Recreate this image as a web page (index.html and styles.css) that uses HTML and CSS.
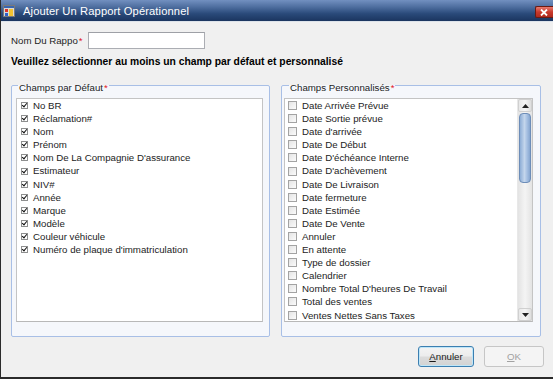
FILE: index.html
```html
<!DOCTYPE html>
<html lang="fr">
<head>
<meta charset="utf-8">
<title>Ajouter Un Rapport Opérationnel</title>
<link rel="stylesheet" href="styles.css">
</head>
<body>
<div class="window">
  <div class="titlebar">
    <div class="title-left">
      <svg class="app-icon" width="12" height="12" viewBox="0 0 12 12">
        <rect x="0.5" y="0.5" width="11" height="11" fill="#d9d9d9" stroke="#7a7a7a"/>
        <rect x="1" y="1" width="10" height="2" fill="#3a66b0"/>
        <rect x="2" y="4" width="3" height="3" fill="#d8342a"/>
        <rect x="2" y="8" width="3" height="3" fill="#2f62c8"/>
        <rect x="6" y="4" width="4" height="7" fill="#f2c230"/>
      </svg>
      <span class="title-text">Ajouter Un Rapport Opérationnel</span>
    </div>
    <div class="close-btn">
      <svg width="8" height="7" viewBox="0 0 8 7"><path d="M1 0.5 L7 6.5 M7 0.5 L1 6.5" stroke="#fff" stroke-width="1.8"/></svg>
    </div>
  </div>
  <div class="content">
    <div class="name-row">
      <span class="label">Nom Du Rappo<span class="req">*</span></span>
      <div class="textbox"></div>
    </div>
    <div class="hint">Veuillez sélectionner au moins un champ par défaut et personnalisé</div>
    <div class="groups">
      <fieldset class="group group-left">
        <legend>Champs par Défaut<span class="req">*</span></legend>
        <div class="listbox">
          <ul class="items">
            <li><span class="cb on"></span>No BR</li>
            <li><span class="cb on"></span>Réclamation#</li>
            <li><span class="cb on"></span>Nom</li>
            <li><span class="cb on"></span>Prénom</li>
            <li><span class="cb on"></span>Nom De La Compagnie D'assurance</li>
            <li><span class="cb on"></span>Estimateur</li>
            <li><span class="cb on"></span>NIV#</li>
            <li><span class="cb on"></span>Année</li>
            <li><span class="cb on"></span>Marque</li>
            <li><span class="cb on"></span>Modèle</li>
            <li><span class="cb on"></span>Couleur véhicule</li>
            <li><span class="cb on"></span>Numéro de plaque d'immatriculation</li>
          </ul>
        </div>
      </fieldset>
      <fieldset class="group group-right">
        <legend>Champs Personnalisés<span class="req">*</span></legend>
        <div class="listbox">
          <ul class="items">
            <li><span class="cb"></span>Date Arrivée Prévue</li>
            <li><span class="cb"></span>Date Sortie prévue</li>
            <li><span class="cb"></span>Date d'arrivée</li>
            <li><span class="cb"></span>Date De Début</li>
            <li><span class="cb"></span>Date D'échéance Interne</li>
            <li><span class="cb"></span>Date D'achèvement</li>
            <li><span class="cb"></span>Date De Livraison</li>
            <li><span class="cb"></span>Date fermeture</li>
            <li><span class="cb"></span>Date Estimée</li>
            <li><span class="cb"></span>Date De Vente</li>
            <li><span class="cb"></span>Annuler</li>
            <li><span class="cb"></span>En attente</li>
            <li><span class="cb"></span>Type de dossier</li>
            <li><span class="cb"></span>Calendrier</li>
            <li><span class="cb"></span>Nombre Total D'heures De Travail</li>
            <li><span class="cb"></span>Total des ventes</li>
            <li><span class="cb"></span>Ventes Nettes Sans Taxes</li>
          </ul>
          <div class="scrollbar">
            <div class="sb-btn"><svg width="7" height="4" viewBox="0 0 7 4"><path d="M0 4 L3.5 0 L7 4 Z" fill="#222"/></svg></div>
            <div class="sb-track">
              <div class="sb-thumb"></div>
            </div>
            <div class="sb-btn"><svg width="7" height="4" viewBox="0 0 7 4"><path d="M0 0 L3.5 4 L7 0 Z" fill="#222"/></svg></div>
          </div>
        </div>
      </fieldset>
    </div>
    <div class="buttons">
      <div class="btn btn-default"><span class="u">A</span>nnuler</div>
      <div class="btn btn-disabled"><span class="u">O</span>K</div>
    </div>
  </div>
</div>
</body>
</html>
```
FILE: styles.css
```css
* { box-sizing: border-box; }
html, body { margin: 0; padding: 0; }
body {
  width: 553px;
  height: 379px;
  overflow: hidden;
  background: #f0f0f0;
  font-family: "Liberation Sans", Arial, sans-serif;
  font-size: 9.7px;
  color: #1c1c1c;
}
.window {
  width: 553px;
  height: 379px;
  display: flex;
  flex-direction: column;
  border-left: 1px solid #2b2b2b;
  border-bottom: 2px solid #2b2b2b;
  background: #f0f0f0;
}
.titlebar {
  height: 22px;
  flex: none;
  display: flex;
  align-items: center;
  justify-content: space-between;
  background: linear-gradient(#7290c0 0%, #4c6c9d 35%, #2a4a7a 65%, #1b355f 100%);
  border-bottom: 1px solid #dde3ea;
}
.title-left {
  display: flex;
  align-items: center;
  padding-left: 2px;
}
.app-icon { display: block; margin-top: 1px; }
.title-text {
  margin-left: 8px;
  color: #ffffff;
  font-size: 11.2px;
  letter-spacing: 0.1px;
}
.close-btn {
  width: 18px;
  height: 12px;
  margin-top: 3px;
  display: flex;
  align-items: center;
  justify-content: flex-start;
  padding-left: 4px;
  background: linear-gradient(#e77a6e, #c8392c 50%, #b02a1e);
  border: 1px solid #6b1a12;
  border-right: none;
  border-radius: 2px 0 0 2px;
}
.close-btn svg { display: block; }
.content {
  flex: 1;
  display: flex;
  flex-direction: column;
  padding: 10px 9px 0 10px;
}
.name-row {
  display: flex;
  align-items: center;
  height: 17px;
}
.label { width: 77px; }
.req { color: #e0161b; margin-left: 1px; }
.textbox {
  width: 117px;
  height: 17px;
  background: #fff;
  border: 1px solid #abadb3;
  border-top-color: #9ea0a6;
}
.hint {
  margin-top: 7px;
  height: 12px;
  line-height: 12px;
  font-weight: bold;
  font-size: 10.3px;
  color: #000;
}
.groups {
  display: flex;
  gap: 11px;
  margin-top: 8px;
}
.group {
  margin: 0;
  min-width: 0;
  border: 1px solid #a8bfe6;
  border-radius: 2px;
  background: #f5f7fb;
  height: 261px;
}
.group legend {
  padding: 6px 1px 0 1px;
  line-height: 12px;
  height: 18px;
  color: #1c1c1c;
}
.group-left legend { margin-left: 2px; }
.group-right legend { margin-left: 5px; }
.group-left { width: 259px; padding: 4px 6px 14px 4px; }
.group-right { width: 260px; padding: 4px 7px 14px 2px; }
.listbox {
  height: 224px;
  background: #fff;
  border: 1px solid #c4c4c4;
  border-bottom-color: #b8b8b8;
  display: flex;
}
.items {
  list-style: none;
  margin: 0;
  padding: 0;
  flex: 1;
}
.items li {
  height: 13.1px;
  line-height: 13.1px;
  display: flex;
  align-items: center;
  white-space: nowrap;
}
.group-left .items li { padding-left: 4px; }
.group-right .items li { padding-left: 3px; }
.cb {
  flex: none;
  position: relative;
  display: block;
}
.cb.on {
  width: 7px;
  height: 7px;
  margin-right: 5px;
  border: 1px solid #8e8f8f;
  background: #fff;
}
.cb.on::after {
  content: "";
  position: absolute;
  left: 1px;
  top: -1px;
  width: 2px;
  height: 4px;
  border-right: 1.6px solid #111;
  border-bottom: 1.6px solid #111;
  transform: rotate(40deg);
}
.group-right .cb {
  width: 9px;
  height: 9px;
  margin-right: 5px;
  border: 1px solid #a3a3a3;
  background: linear-gradient(135deg, #e4e4e4, #fbfbfb);
}
.scrollbar {
  width: 15px;
  flex: none;
  display: flex;
  flex-direction: column;
  background: linear-gradient(90deg, #e3e3e3, #f4f4f4 50%, #e3e3e3);
  border-left: 1px solid #e8e8e8;
}
.sb-btn {
  height: 13px;
  flex: none;
  display: flex;
  align-items: center;
  justify-content: center;
  background: linear-gradient(90deg, #e8e8e8, #f6f6f6 50%, #dedede);
  border: 1px solid #d0d0d0;
  border-radius: 2px;
}
.sb-btn svg { display: block; }
.sb-track { flex: 1; padding: 1px 0; }
.sb-thumb {
  height: 70px;
  margin: 0 1px;
  border: 1px solid #6d8db8;
  border-radius: 4px;
  background: linear-gradient(90deg, #8eaed6, #c4d6ec 45%, #a6c0e2 70%, #86a6d0);
}
.buttons {
  display: flex;
  justify-content: flex-end;
  gap: 10px;
  margin-top: 9px;
}
.btn {
  height: 21px;
  display: flex;
  align-items: center;
  justify-content: center;
  border-radius: 3px;
  font-size: 9.7px;
}
.u { text-decoration: underline; }
.btn-default {
  width: 56px;
  border: 1px solid #3c7fb1;
  background: linear-gradient(#f4f4f4 0%, #ececec 48%, #dcdcdc 52%, #d2d2d2 100%);
  box-shadow: inset 0 0 0 1px #bfe6f8;
  color: #1a1a1a;
}
.btn-disabled {
  width: 60px;
  border: 1px solid #c6c6c6;
  background: #f4f4f4;
  color: #a2a2a2;
}
```
